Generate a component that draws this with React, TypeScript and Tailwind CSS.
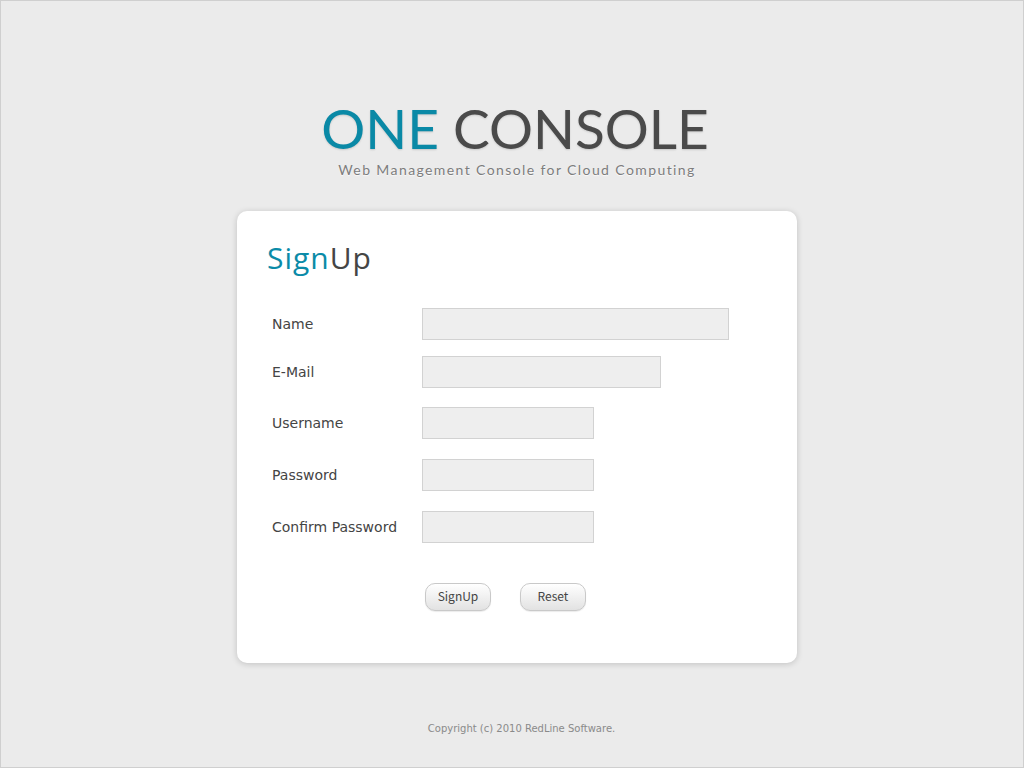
import React from "react";

const rows = [
  { label: "Name", w: "w-[307px]", mt: "mt-[97px]" },
  { label: "E-Mail", w: "w-[239px]", mt: "mt-[16px]" },
  { label: "Username", w: "w-[172px]", mt: "mt-[19px]" },
  { label: "Password", w: "w-[172px]", mt: "mt-[20px]" },
  { label: "Confirm Password", w: "w-[172px]", mt: "mt-[20px]" },
];

function Btn({ children }: { children: React.ReactNode }) {
  return (
    <button className="w-[66px] h-[28px] rounded-[10px] border border-[#c9c9c9] bg-gradient-to-b from-white to-[#e2e2e2] text-[12px] leading-[14px] pb-[3px] text-[#444] font-['Noto_Sans_CJK_SC',sans-serif] shadow-[0_1px_1px_rgba(0,0,0,0.08)] flex items-center justify-center">
      {children}
    </button>
  );
}

export default function App() {
  return (
    <div className="w-[1024px] h-[768px] border border-[#cfcfcf] bg-[#ebebeb] flex flex-col items-center overflow-hidden">
      <div className="mt-[95px] ml-[6px] flex flex-col items-center">
        <h1 className="text-[55px] leading-[64px] tracking-[0px] font-['Lato',sans-serif] font-normal [text-shadow:0_1px_2px_rgba(0,0,0,0.15)]">
          <span className="text-[#0a89a6]">ONE</span>{" "}
          <span className="text-[#4a4a4a]">CONSOLE</span>
        </h1>
        <p className="mt-[1px] ml-[4px] text-[14px] leading-[18px] tracking-[1.4px] text-[#7d7d7d] font-['Lato',sans-serif] [text-shadow:0_1px_1px_rgba(255,255,255,0.8)]">
          Web Management Console for Cloud Computing
        </p>
      </div>

      <div className="mt-[32px] ml-[10px] w-[560px] h-[452px] rounded-[10px] bg-white shadow-[0_1px_6px_rgba(0,0,0,0.18)] relative">
        <div className="absolute left-[30px] top-[29px] text-[30px] leading-[36px] tracking-[1px] font-['Open_Sans',sans-serif]">
          <span className="text-[#0b8ba8]">Sign</span>
          <span className="text-[#454545]">Up</span>
        </div>
        <div className="flex flex-col pl-[35px]">
          {rows.map((r) => (
            <div key={r.label} className={`flex items-center ${r.mt}`}>
              <label className="w-[150px] text-[14px] text-[#444] font-['DejaVu_Sans',sans-serif]">
                {r.label}
              </label>
              <div className={`${r.w} h-[32px] bg-[#eeeeee] border border-[#d2d2d2]`} />
            </div>
          ))}
          <div className="flex mt-[40px] ml-[153px] gap-[29px]">
            <Btn>SignUp</Btn>
            <Btn>Reset</Btn>
          </div>
        </div>
      </div>

      <p className="mt-[58px] ml-[19px] text-[10px] text-[#8a8a8a] font-['DejaVu_Sans',sans-serif]">
        Copyright (c) 2010 RedLine Software.
      </p>
    </div>
  );
}
